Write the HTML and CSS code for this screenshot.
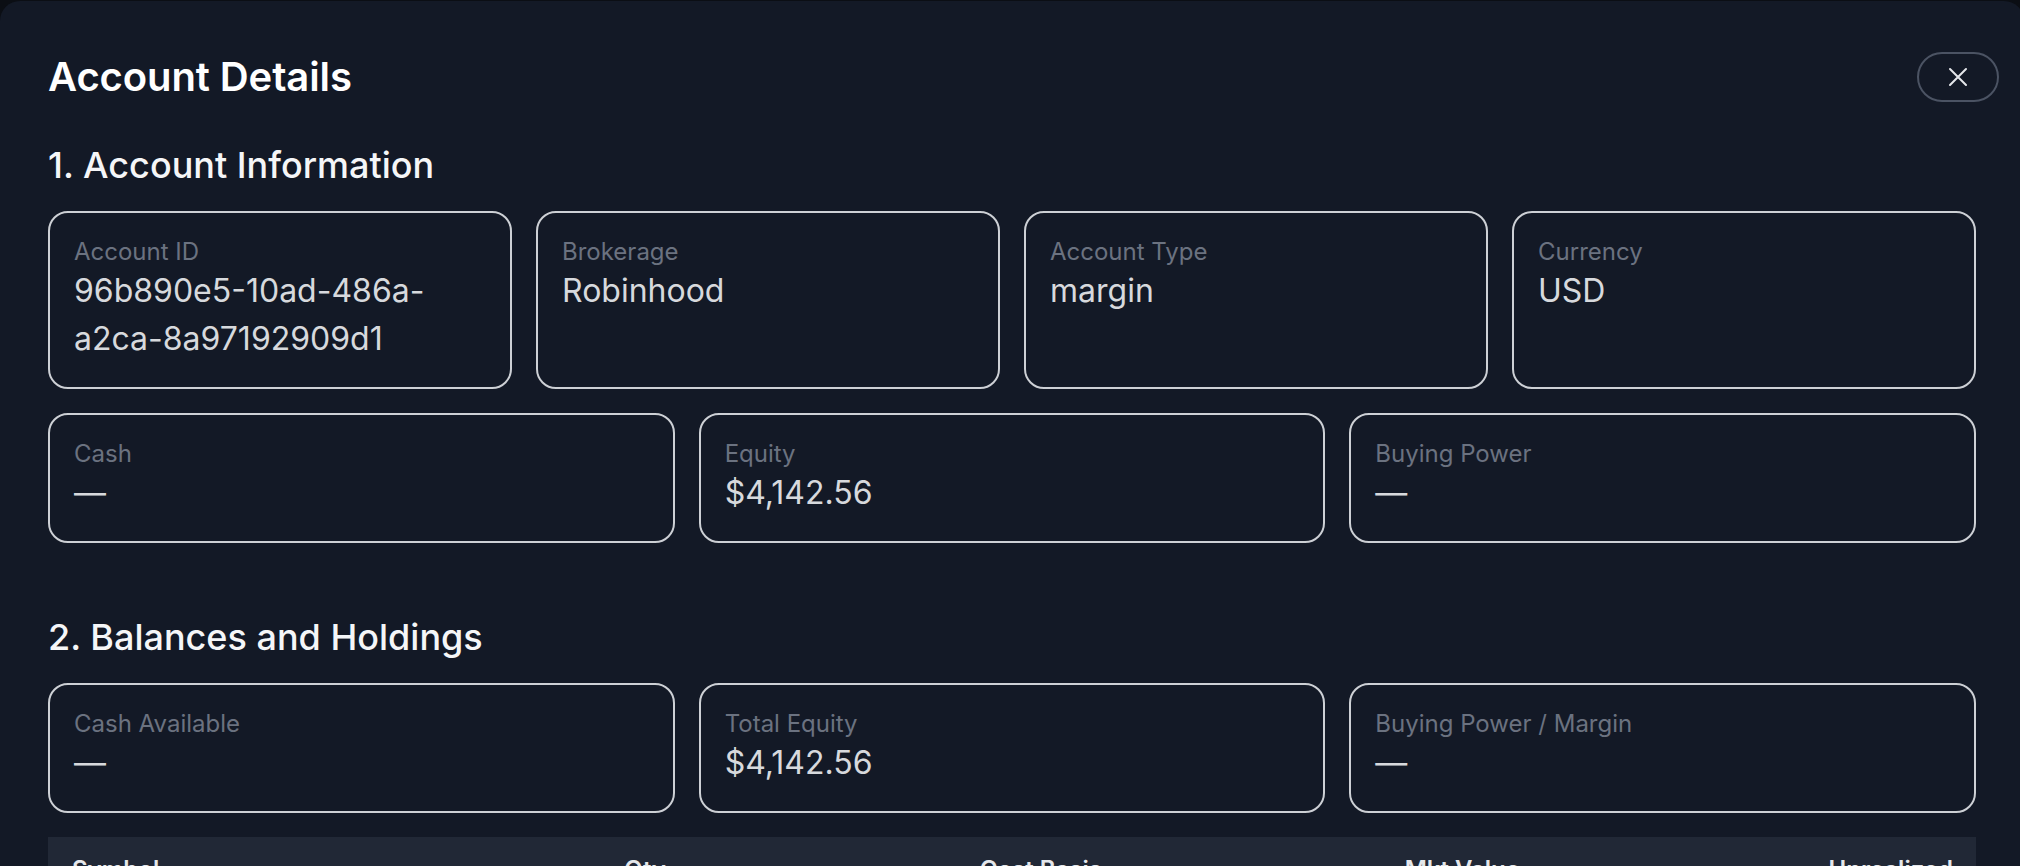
FILE: index.html
```html
<!DOCTYPE html>
<html lang="en">
<head>
<meta charset="utf-8">
<title>Account Details</title>
<link rel="stylesheet" href="styles.css">
</head>
<body>
<div class="modal">
  <header class="modal-header">
    <h1 class="modal-title">Account Details</h1>
    <button class="close-btn" aria-label="Close">
      <svg width="20" height="20" viewBox="0 0 20 20" fill="none" stroke="currentColor" stroke-width="2" stroke-linecap="round"><path d="M2 2L18 18M18 2L2 18"/></svg>
    </button>
  </header>

  <section class="section">
    <h2 class="section-title">1. Account Information</h2>
    <div class="grid grid-4">
      <div class="card"><div class="label">Account ID</div><div class="value">96b890e5-10ad-486a-a2ca-8a97192909d1</div></div>
      <div class="card"><div class="label">Brokerage</div><div class="value">Robinhood</div></div>
      <div class="card"><div class="label">Account Type</div><div class="value">margin</div></div>
      <div class="card"><div class="label">Currency</div><div class="value">USD</div></div>
    </div>
    <div class="grid grid-3">
      <div class="card"><div class="label">Cash</div><div class="value">—</div></div>
      <div class="card"><div class="label">Equity</div><div class="value">$4,142.56</div></div>
      <div class="card"><div class="label">Buying Power</div><div class="value">—</div></div>
    </div>
  </section>

  <section class="section section-2">
    <h2 class="section-title">2. Balances and Holdings</h2>
    <div class="grid grid-3">
      <div class="card"><div class="label">Cash Available</div><div class="value">—</div></div>
      <div class="card"><div class="label">Total Equity</div><div class="value">$4,142.56</div></div>
      <div class="card"><div class="label">Buying Power / Margin</div><div class="value">—</div></div>
    </div>
    <div class="table">
      <div class="thead">
        <div class="th th-left">Symbol</div>
        <div class="th">Qty</div>
        <div class="th">Cost Basis</div>
        <div class="th">Mkt Value</div>
        <div class="th">Unrealized</div>
      </div>
    </div>
  </section>
</div>
</body>
</html>
```

FILE: styles.css
```css
* { box-sizing: border-box; }
html, body { margin: 0; padding: 0; }
body {
  background: #0b0e14;
  font-family: Inter, "Noto Sans", sans-serif;
  overflow: hidden;
  height: 866px;
}
.modal {
  margin-top: 1px;
  width: 2024px;
  min-height: 900px;
  background: #131926;
  border-radius: 20px 20px 0 0;
  padding: 51px 48px 48px 48px;
}
.modal-header {
  display: flex;
  align-items: center;
  justify-content: space-between;
  height: 50px;
}
.modal-title {
  margin: 0;
  font-size: 40px;
  font-weight: 600;
  color: #ffffff;
  line-height: 50px;
  letter-spacing: -0.1px;
}
.close-btn {
  width: 82px;
  height: 50px;
  margin-right: -23px;
  border: 2px solid #4b5363;
  border-radius: 25px;
  background: transparent;
  color: #e5e7eb;
  display: flex;
  align-items: center;
  justify-content: center;
  padding: 0;
}
.section { margin-top: 41px; }
.section-2 { margin-top: 72px; }
.section-title {
  margin: 0 0 24px 0;
  font-size: 36px;
  font-weight: 500;
  line-height: 44px;
  color: #f5f6f8;
}
.grid { display: grid; gap: 24px; margin-bottom: 24px; }
.grid-4 { grid-template-columns: repeat(4, 1fr); }
.grid-3 { grid-template-columns: repeat(3, 1fr); }
.card {
  border: 2px solid #cdd0d5;
  border-radius: 20px;
  padding: 24px 24px 24px 24px;
}
.label {
  font-size: 24px;
  line-height: 30px;
  color: #6b7280;
}
.value {
  font-size: 32px;
  line-height: 48px;
  color: #d7d9dd;
  overflow-wrap: anywhere;
}
.table {
  background: #212836;
  width: 1928px;
}
.thead {
  display: grid;
  grid-template-columns: 228px 366px 436px 418px 433px;
  padding: 18px 23px 18px 24px;
}
.th {
  font-size: 24px;
  line-height: 30px;
  font-weight: 600;
  color: #e5e7eb;
  text-align: right;
}
.th-left { text-align: left; }
```
